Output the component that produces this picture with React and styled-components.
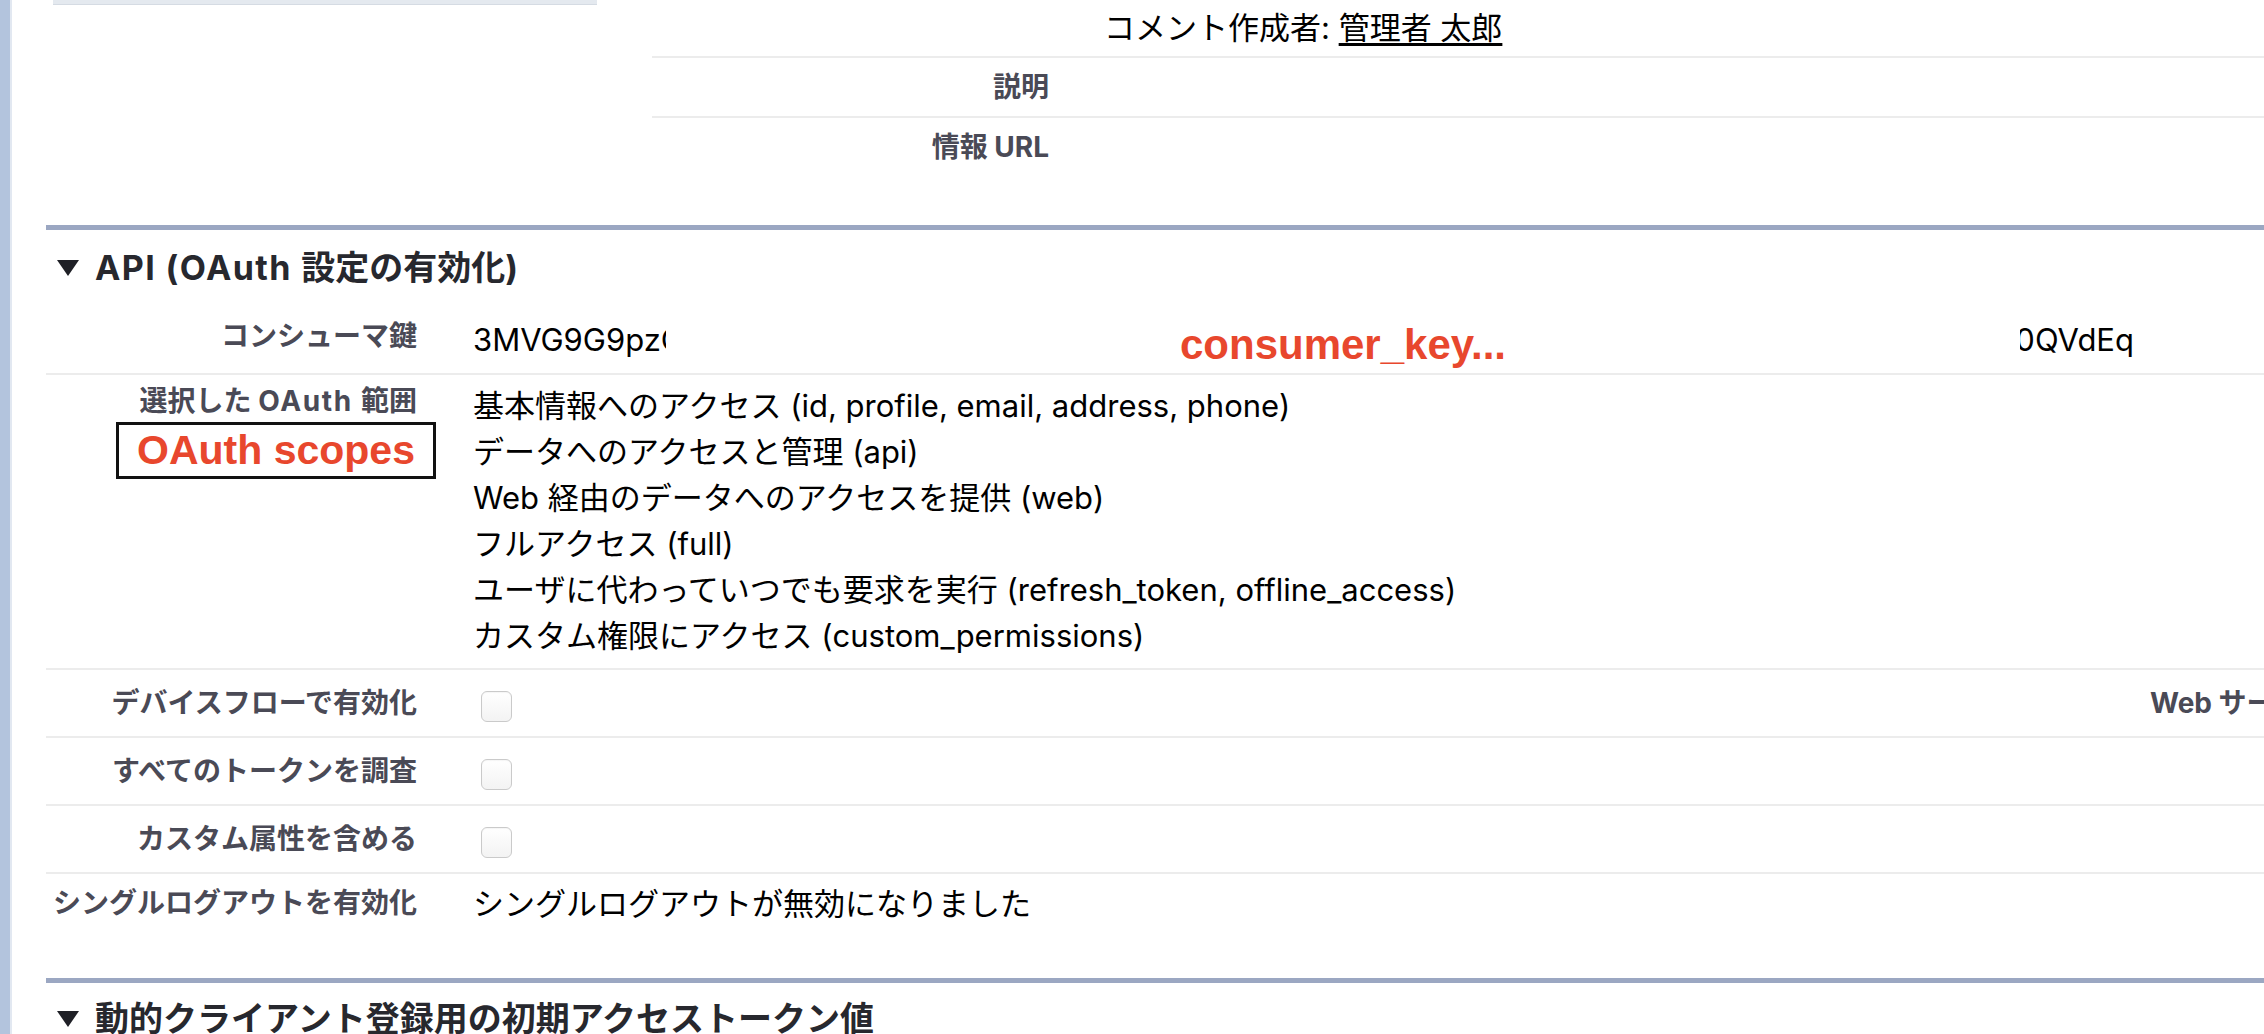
import React from "react";
import styled, { createGlobalStyle } from "styled-components";

const GlobalStyle = createGlobalStyle`
  html, body {
    margin: 0;
    padding: 0;
    background: #ffffff;
    overflow: hidden;
  }
  body {
    font-family: "Inter", "Noto Sans CJK JP", sans-serif;
    color: #000;
  }
`;

const Page = styled.div`
  display: flex;
  width: 2264px;
  height: 1034px;
  overflow: hidden;
`;

const SideStrip = styled.div`
  width: 10px;
  flex-shrink: 0;
  background: #b3c4dd;
  border-right: 2px solid #e2e8f1;
`;

const Content = styled.div`
  flex: 1;
  min-width: 0;
  padding-left: 34px;
`;

const TopArea = styled.div`
  display: flex;
  gap: 55px;
  height: 225px;
`;

const LeftPane = styled.div`
  width: 544px;
  padding-left: 7px;
  flex-shrink: 0;
`;

const PaneBottom = styled.div`
  height: 4px;
  background: #e4e9ef;
  border-bottom: 1px solid #d5dbe3;
`;

const TopTable = styled.div`
  flex: 1;
  min-width: 0;
`;

const TopRow = styled.div`
  display: grid;
  grid-template-columns: 420px 1fr;
  padding: ${(p) => p.$pad || "6px 0 5px"};
  border-bottom: ${(p) => (p.$last ? "none" : "2px solid #ececec")};
  line-height: 47px;
`;

const Section = styled.section`
  border-top: 5px solid #9ba7c2;
`;

const SectionHeader = styled.h3`
  margin: 0;
  display: flex;
  align-items: center;
  gap: 15px;
  padding: ${(p) => p.$pad || "14px 0 12px 10px"};
  font-size: 34px;
  line-height: 47px;
  font-weight: bold;
  color: #27282e;
  white-space: nowrap;
`;

const Latin = styled.span`
  letter-spacing: ${(p) => p.$ls || "1px"};
`;

const Row = styled.div`
  display: grid;
  grid-template-columns: 394px 1701px 1fr;
  padding: ${(p) => p.$pad || "10px 0"};
  border-bottom: ${(p) => (p.$last ? "none" : "2px solid #ececec")};
  line-height: 47px;
`;

const Label = styled.div`
  font-size: 28px;
  font-weight: bold;
  color: #4a4a56;
  line-height: ${(p) => (p.$tight ? "36px" : "inherit")};
  text-align: ${(p) => (p.$left ? "left" : "right")};
  padding: ${(p) => (p.$left ? "0 0 0 9px" : "0 23px 0 0")};
  white-space: nowrap;
  overflow: ${(p) => (p.$left ? "hidden" : "visible")};
  display: flex;
  flex-direction: column;
  align-items: ${(p) => (p.$left ? "flex-start" : "flex-end")};
`;

const Value = styled.div`
  font-size: 31px;
  padding: 0 7px 0 ${(p) => p.$indent || "33px"};
  white-space: nowrap;
  min-width: 0;
`;

const Link = styled.a`
  color: #000;
  text-decoration: underline;
  text-underline-offset: 4px;
`;

const KeyLine = styled.div`
  display: flex;
  align-items: baseline;
`;

const KeyHead = styled.span`
  width: 193px;
  overflow: hidden;
  flex-shrink: 0;
`;

const Redacted = styled.span`
  flex: 1;
  text-align: center;
`;

const KeyTail = styled.span`
  width: 114px;
  flex-shrink: 0;
  display: flex;
  justify-content: flex-end;
  overflow: hidden;
`;

const Note = styled.span`
  color: #e8472d;
  font-weight: bold;
  font-size: 42px;
  font-family: "Liberation Sans", sans-serif;
  position: relative;
  top: 8px;
`;

const NoteBox = styled.div`
  width: 314px;
  height: 51px;
  margin: 3px -19px 0 0;
  border: 3px solid #111;
  display: flex;
  align-items: center;
  justify-content: center;
  color: #e8472d;
  font-weight: bold;
  font-size: 41px;
  font-family: "Liberation Sans", sans-serif;
  line-height: 1;
`;

const ScopeList = styled.ul`
  list-style: none;
  margin: 0;
  padding: 0;
  line-height: 46px;
`;

const Check = styled.span`
  display: inline-block;
  vertical-align: middle;
  margin-left: 8px;
  width: 29px;
  height: 29px;
  border: 1px solid #cacaca;
  border-radius: 6px;
  background: linear-gradient(#ffffff, #f3f3f3);
  box-shadow: inset 0 1px 1px rgba(0, 0, 0, 0.04);
`;

const Arrow = () => (
  <svg width="24" height="18" viewBox="0 0 24 18">
    <path d="M1 1 L23 1 L12 17 Z" fill="#1f2026" />
  </svg>
);

const scopes = [
  "基本情報へのアクセス (id, profile, email, address, phone)",
  "データへのアクセスと管理 (api)",
  "Web 経由のデータへのアクセスを提供 (web)",
  "フルアクセス (full)",
  "ユーザに代わっていつでも要求を実行 (refresh_token, offline_access)",
  "カスタム権限にアクセス (custom_permissions)",
];

const checkRows = [
  { label: "デバイスフローで有効化", extra: "Web サーバフローの秘密が必要" },
  { label: "すべてのトークンを調査" },
  { label: "カスタム属性を含める" },
];

export default function App() {
  return (
    <>
      <GlobalStyle />
      <Page>
        <SideStrip />
        <Content>
          <TopArea>
            <LeftPane>
              <PaneBottom />
            </LeftPane>
            <TopTable>
              <TopRow $pad="4px 0 5px">
                <div />
                <Value $indent="32px">
                  コメント作成者: <Link>管理者 太郎</Link>
                </Value>
              </TopRow>
              <TopRow>
                <Label>説明</Label>
                <Value />
              </TopRow>
              <TopRow $last>
                <Label>情報 URL</Label>
                <Value />
              </TopRow>
            </TopTable>
          </TopArea>

          <Section>
            <SectionHeader>
              <Arrow />
              <span>
                <Latin $ls="1.4px">API (OAuth </Latin>設定の有効化)
              </span>
            </SectionHeader>

            <Row>
              <Label>コンシューマ鍵</Label>
              <Value>
                <KeyLine>
                  <KeyHead>3MVG9G9pzCUSk</KeyHead>
                  <Redacted>
                    <Note>consumer_key...</Note>
                  </Redacted>
                  <KeyTail>0QVdEq</KeyTail>
                </KeyLine>
              </Value>
              <div />
            </Row>

            <Row $pad="8px 0 9px">
              <Label $tight>
                <span>
                  選択した <Latin $ls="1.6px">OAuth </Latin>範囲
                </span>
                <NoteBox>OAuth scopes</NoteBox>
              </Label>
              <Value>
                <ScopeList>
                  {scopes.map((s) => (
                    <li key={s}>{s}</li>
                  ))}
                </ScopeList>
              </Value>
              <div />
            </Row>

            {checkRows.map((r) => (
              <Row key={r.label} $pad="10px 0 9px">
                <Label>{r.label}</Label>
                <Value>
                  <Check />
                </Value>
                {r.extra ? <Label $left>{r.extra}</Label> : <div />}
              </Row>
            ))}

            <Row $pad="6px 0 51px" $last>
              <Label>シングルログアウトを有効化</Label>
              <Value>シングルログアウトが無効になりました</Value>
              <div />
            </Row>
          </Section>

          <Section>
            <SectionHeader $pad="12px 0 12px 10px">
              <Arrow />
              動的クライアント登録用の初期アクセストークン値
            </SectionHeader>
          </Section>
        </Content>
      </Page>
    </>
  );
}
